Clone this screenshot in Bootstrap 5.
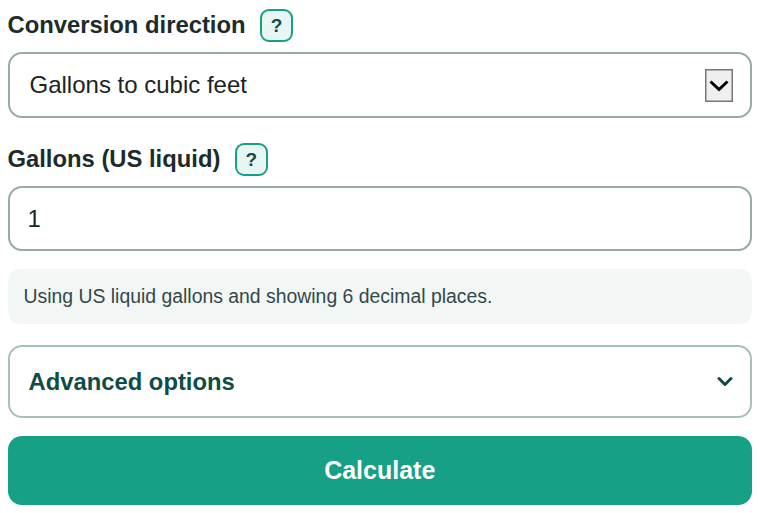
<!DOCTYPE html>
<html lang="en">
<head>
<meta charset="utf-8">
<title>Gallons to cubic feet</title>
<link rel="stylesheet" href="https://cdn.jsdelivr.net/npm/bootstrap@5.3.0/dist/css/bootstrap.min.css">
<style>
html, body { background: #fff; overflow: hidden; }
body { font-family: "Liberation Sans", Arial, sans-serif; color: #1f2a2b; }
.calc-wrap { padding: 7px 8px 0 7.5px; }
.calc-label { font-size: 23.8px; line-height: 36px; font-weight: 700; color: #1c2b2d; margin: 0 0 9px 0; height: 36px; gap: 14.5px; }
.help-chip { width: 33px; height: 33px; padding: 0; border: 2px solid #16a085; border-radius: 9px; background: #e8f6f3; color: #0f4c45; font-weight: 700; font-size: 19px; line-height: 1; }
.calc-select.form-select, .calc-input.form-control { height: 66px; border: 2px solid #98aaa7; border-radius: 14px; font-size: 24px; color: #1c2426; box-shadow: none; }
.calc-select.form-select { padding: 0 60px 0 20px; background-image: url("data:image/svg+xml,%3Csvg xmlns='http://www.w3.org/2000/svg' width='28' height='33'%3E%3Crect x='.75' y='.75' width='26.5' height='31.5' fill='%23efefef' stroke='%23767676' stroke-width='1.5'/%3E%3Cpath d='M5.500 12.500l8.500 8 8.500-8' fill='none' stroke='%23000' stroke-width='3'/%3E%3C/svg%3E"); background-repeat: no-repeat; background-position: right 17px center; background-size: 28px 33px; }
.calc-input.form-control { height: 65px; padding: 0 18px; }
.group-gap { margin-bottom: 23px; }
.info-note { height: 55px; margin-top: 18px; padding: 0 16px; background: #f2f7f6; border-radius: 12px; font-size: 19.4px; color: #33484a; }
.adv-toggle { height: 73px; margin-top: 21px; padding: 0 17px 0 19px; border: 2px solid #a9bfbb; border-radius: 14px; background: #fff; color: #0f4c45; font-size: 23.8px; font-weight: 700; }
.calc-btn.btn { height: 69px; margin-top: 18px; border: 0; border-radius: 14px; background: #16a085; color: #fff; font-size: 25px; font-weight: 700; }
</style>
</head>
<body>
<form class="calc-wrap" onsubmit="return false">
  <div class="group-gap">
    <label class="calc-label d-flex align-items-center" for="dir"><span>Conversion direction</span><button type="button" class="help-chip">?</button></label>
    <select id="dir" class="form-select calc-select"><option>Gallons to cubic feet</option><option>Cubic feet to gallons</option></select>
  </div>
  <div>
    <label class="calc-label d-flex align-items-center" for="val"><span>Gallons (US liquid)</span><button type="button" class="help-chip">?</button></label>
    <input id="val" class="form-control calc-input" type="text" value="1">
  </div>
  <div class="info-note d-flex align-items-center">Using US liquid gallons and showing 6 decimal places.</div>
  <div class="adv-toggle d-flex align-items-center justify-content-between">
    <span>Advanced options</span>
    <svg width="16" height="11" viewBox="0 0 16 11" aria-hidden="true"><path d="M2 2.500l6 6 6-6" fill="none" stroke="#0f4c45" stroke-width="3" stroke-linecap="round" stroke-linejoin="round"/></svg>
  </div>
  <button class="btn calc-btn w-100 d-block" type="submit">Calculate</button>
</form>
<script src="https://cdn.jsdelivr.net/npm/bootstrap@5.3.0/dist/js/bootstrap.bundle.min.js"></script>
</body>
</html>
